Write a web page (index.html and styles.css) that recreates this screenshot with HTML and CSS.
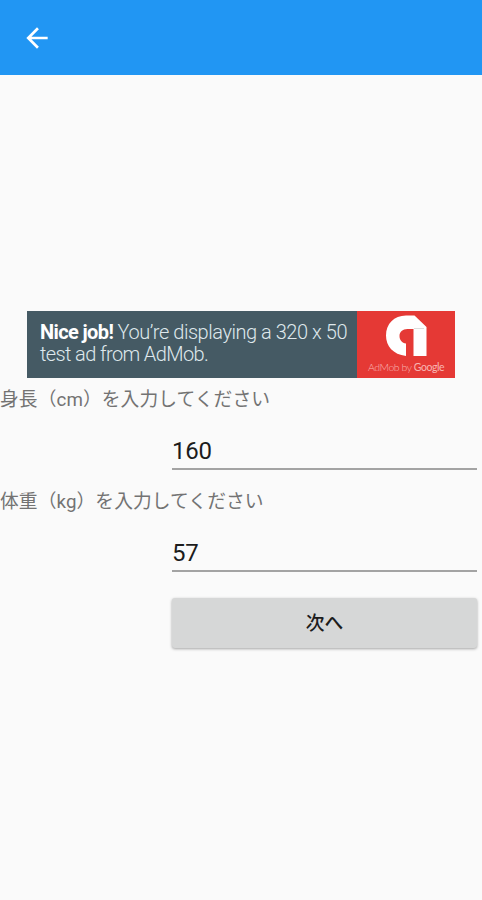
FILE: index.html
```html
<!DOCTYPE html>
<html lang="ja">
<head>
<meta charset="utf-8">
<title>BMI</title>
<link rel="stylesheet" href="styles.css">
</head>
<body>
<header class="app-bar">
  <button class="back" aria-label="戻る">
    <svg viewBox="0 0 24 24"><path d="M20 11H7.83l5.59-5.59L12 4l-8 8 8 8 1.41-1.41L7.83 13H20z"/></svg>
  </button>
</header>
<main class="content">
  <section class="ad">
    <p class="ad-text"><b>Nice job!</b><span class="ad-size"> You’re displaying a 320 x 50</span><br>test ad from AdMob.</p>
    <div class="ad-brand">
      <svg class="ad-logo" viewBox="0 0 41 41"><path d="M20 41C7 39.500 0 31 0 20.500C0 9 8 0.500 20 0.500H28.500L40.500 12V41H27.500V14H21.500C16.500 14 13.500 17 13.500 21C13.500 25 16 28 20 28.500Z"/><path class="fold" d="M28 14V13H38V14Z"/></svg>
      <span class="ad-caption">AdMob by <b>Google</b></span>
    </div>
  </section>
  <form class="form">
    <label class="label" for="height">身長（cm）を入力してください</label>
    <input class="field" id="height" type="text" value="160">
    <label class="label" for="weight">体重（kg）を入力してください</label>
    <input class="field" id="weight" type="text" value="57">
    <button class="next" type="button">次へ</button>
  </form>
</main>
</body>
</html>
```
FILE: styles.css
```css
* { box-sizing: border-box; }
body {
  margin: 0;
  min-height: 900px;
  background: #fafafa;
  font-family: Roboto, "Noto Sans CJK JP", sans-serif;
}
.app-bar {
  display: flex;
  align-items: center;
  height: 75px;
  padding-left: 21px;
  background: #2196f3;
}
.back {
  width: 32px;
  height: 32px;
  padding: 0;
  border: 0;
  background: none;
}
.back svg { display: block; fill: #fff; }
.content { padding-top: 236px; }
.ad {
  display: flex;
  width: 428px;
  height: 67px;
  margin-left: 27px;
  background: #455a64;
}
.ad-text {
  width: 330px;
  margin: 0;
  padding: 10px 0 0 13px;
  color: #dfe8ec;
  font-size: 20px;
  font-weight: 300;
  line-height: 22px;
  letter-spacing: -.62px;
  white-space: nowrap;
}
.ad-text b { color: #fff; font-weight: 700; }
.ad-size { letter-spacing: -.46px; }
.ad-brand {
  display: flex;
  flex-direction: column;
  align-items: center;
  width: 98px;
  padding-top: 4px;
  background: #e53935;
}
.ad-logo { width: 41px; height: 41px; fill: #fff; }
.ad-logo .fold { fill: #ddd; }
.ad-caption {
  margin-top: 5px;
  color: #f8b5b3;
  font: 300 10.500px/12px Lato, sans-serif;
  letter-spacing: -.45px;
  white-space: nowrap;
}
.ad-caption b { font-weight: 400; }
.form { display: flex; flex-direction: column; }
.label {
  height: 43px;
  padding-top: 10px;
  color: #737373;
  font-size: 18.75px;
  line-height: 25px;
  letter-spacing: .08px;
  white-space: nowrap;
}
.field {
  width: 305px;
  height: 49px;
  margin: 0 0 10px 172px;
  padding: 12px 0 0;
  border: 0;
  border-bottom: 2px solid #a3a3a3;
  outline: 0;
  background: none;
  color: #1c1c1c;
  font: 400 24px/28px Roboto, sans-serif;
  letter-spacing: -.2px;
}
.next {
  width: 305px;
  height: 50px;
  margin: 16px 0 0 172px;
  padding: 2px 0 0;
  border: 0;
  border-radius: 3px;
  background: #d6d7d7;
  box-shadow: 0 1px 3px rgba(0, 0, 0, .35);
  color: #1c1c1c;
  font: 500 18.75px/48px Roboto, "Noto Sans CJK JP", sans-serif;
}
```
